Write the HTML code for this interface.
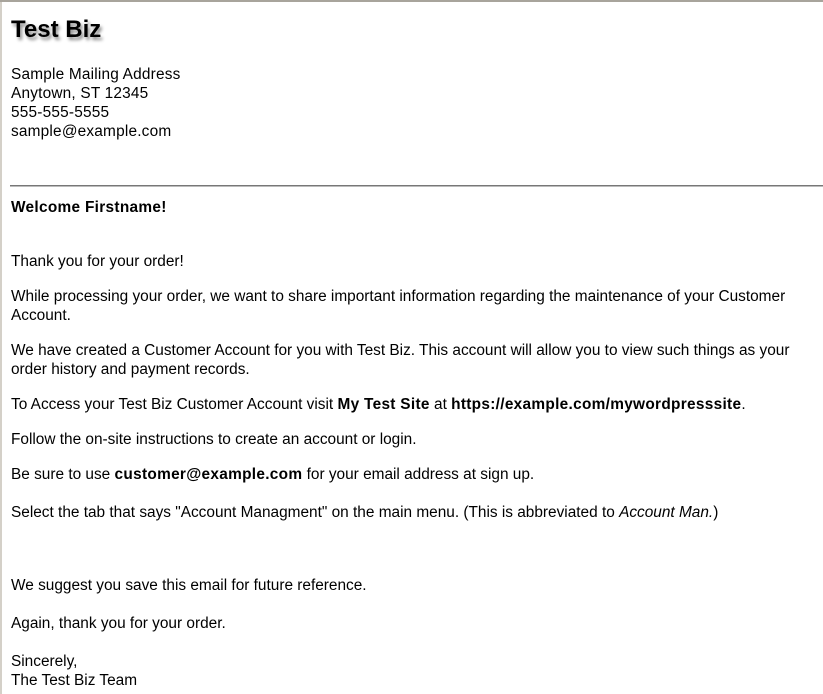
<!DOCTYPE html>
<html><head><meta charset="utf-8"><style>
html,body{margin:0;padding:0;}
body{width:823px;height:694px;position:relative;overflow:hidden;background:#fff;font-family:"Liberation Sans",Arial,sans-serif;font-size:15.4px;line-height:19px;color:#000;}
.lb{position:absolute;left:0;top:0;width:2px;height:694px;background:#d4d0c8;}
.tb{position:absolute;left:0;top:0;width:823px;height:2px;background:#a8a49c;}
.t{position:absolute;left:11px;white-space:nowrap;}
b{letter-spacing:0.3px;}
h1{position:absolute;left:11px;top:16px;margin:0;font-size:24px;line-height:28px;font-weight:bold;text-shadow:2px 3px 3px rgba(0,0,0,0.45);}
.hr{position:absolute;left:10px;top:185px;width:813px;height:1px;background:#777;border-bottom:1px solid #bbb;}
</style></head><body>
<div class="lb"></div><div class="tb"></div>
<h1>Test Biz</h1>
<div class="t" style="top:65px;letter-spacing:0.2px">Sample Mailing Address<br>Anytown, ST 12345<br>555-555-5555<br>sample@example.com</div>
<div class="hr"></div>
<div class="t" style="top:198px"><b>Welcome Firstname!</b></div>
<div class="t" style="top:252px">Thank you for your order!</div>
<div class="t" style="top:287px">While processing your order, we want to share important information regarding the maintenance of your Customer<br>Account.</div>
<div class="t" style="top:341px">We have created a Customer Account for you with Test Biz. This account will allow you to view such things as your<br>order history and payment records.</div>
<div class="t" style="top:395px">To Access your Test Biz Customer Account visit <b>My Test Site</b> at <b>https://example.com/mywordpresssite</b>.</div>
<div class="t" style="top:430px">Follow the on-site instructions to create an account or login.</div>
<div class="t" style="top:465px">Be sure to use <b>customer@example.com</b> for your email address at sign up.</div>
<div class="t" style="top:503px">Select the tab that says "Account Managment" on the main menu. (This is abbreviated to <i>Account Man.</i>)</div>
<div class="t" style="top:576px">We suggest you save this email for future reference.</div>
<div class="t" style="top:614px">Again, thank you for your order.</div>
<div class="t" style="top:652px">Sincerely,<br>The Test Biz Team</div>
</body></html>
